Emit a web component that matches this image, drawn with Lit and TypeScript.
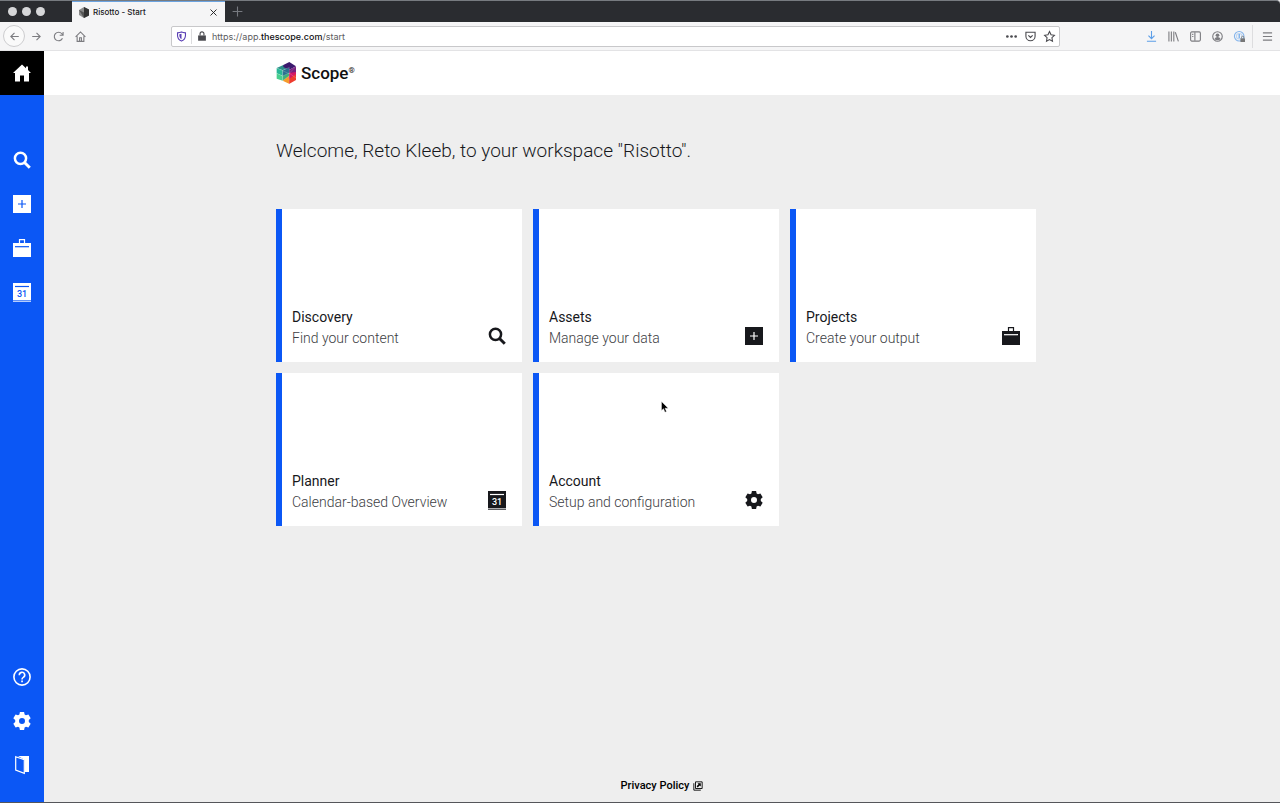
import { LitElement, html, svg, css } from "lit";
import { customElement, property } from "lit/decorators.js";

const shapes: Record<string, unknown> = {
  home: svg`<path d="M9 .5 0 9h2v8.500h5v-6h4v6h5V9h2L15 6.100V2.500h-2v1.700z" />`,
  search: svg`<circle cx="7.500" cy="7.300" r="5.600" fill="none" stroke="currentColor" stroke-width="2.500" /><path d="m11.500 11.500 5.300 5.200" stroke="currentColor" stroke-width="3" />`,
  plus: svg`<path d="M0 0h18v18H0z" /><path class="cut" d="M9 5v8M5 9h8" />`,
  case: svg`<path d="M0 4h18v14H0z" /><path d="M6.500 4V.700h5V4" fill="none" stroke="currentColor" stroke-width="1.200" /><path class="cut" d="M2 7.700h14" />`,
  calendar: svg`<path d="M0 0h18v17H0z" /><path class="cut" d="M2 3.500h14" /><text class="day" x="9" y="13.500" text-anchor="middle">31</text><path d="M0 17.500h18v1.500H0z" opacity=".7" />`,
  help: svg`<circle cx="9" cy="9" r="8.100" fill="none" stroke="currentColor" stroke-width="1.600" /><path d="M6.300 7.200a2.700 2.700 0 1 1 4 2.200Q9 10.200 9 11.400" fill="none" stroke="currentColor" stroke-width="1.600" /><path d="M8.200 12.500h1.700v1.700H8.200z" />`,
  gear: svg`<path fill-rule="evenodd" d="M6.900 0h4.200l.5 2.500 1.400.8L15.400 2.500 17.700 6.200l-1.900 1.900v1.800l1.900 1.900-2.300 3.700-2.400-.8-1.400.8-.5 2.500H6.900l-.5-2.500-1.400-.8-2.400.8L.300 11.800l1.900-1.900V8.100L.300 6.200 2.600 2.500 5 3.300l1.400-.8zM9 6a3 3 0 1 0 0 6 3 3 0 0 0 0-6z" />`,
  door: svg`<path d="M5 0h11v16h-4V4z" /><path d="M2.700.700 11.300 3.700v13.600L2.700 14z" fill="none" stroke="currentColor" stroke-width="1.200" />`,
  external: svg`<path d="M4.500 1.500h12v12h-12z" fill="none" stroke="currentColor" stroke-width="1.600" /><path d="M1.500 4v12.500H14" fill="none" stroke="currentColor" stroke-width="1.600" /><path d="M8 4h6v6l-2-2-3.500 3.500-2-2L10 6z" />`,
  back: svg`<path class="line" d="M16 9H3m6-6-6 6 6 6" />`,
  forward: svg`<path class="line" d="M2 9h13m-6-6 6 6-6 6" />`,
  reload: svg`<path class="line" d="M15.500 12a7 7 0 1 1-1-7.500l1.500 2.500M16.500 1.500V7H11" />`,
  house: svg`<path class="line" d="m1 9.500 8-8 8 8M3.500 8.500V17h11V8.500M7.500 17v-6h3v6" />`,
  close: svg`<path class="line" d="m3 3 12 12M15 3 3 15" />`,
  add: svg`<path class="line" d="M9 1v16M1 9h16" />`,
  shield: svg`<path class="line" d="M9 1.500c2 1 4 1.300 6.500 1.500v4c0 5-2.500 8-6.500 9.500C5 15 2.500 12 2.500 7V3C5 2.800 7 2.500 9 1.500z" /><path d="M9 4.500v9C6.500 12 5.500 10 5.500 7.500V5.200Q7.500 5 9 4.500z" />`,
  lock: svg`<path d="M2 8h14v9.500H2z" /><path d="M5.500 8V5a3.500 3.500 0 0 1 7 0v3" fill="none" stroke="currentColor" stroke-width="2" />`,
  dots: svg`<circle cx="2.200" cy="9" r="2.200" /><circle cx="9" cy="9" r="2.200" /><circle cx="15.800" cy="9" r="2.200" />`,
  pocket: svg`<path class="line" d="M1.500 2h15v6.500a7.500 7.500 0 0 1-15 0zM5.500 7 9 10.500 12.500 7" />`,
  star: svg`<path class="line" d="m9 1 2.500 5.200 5.500.8-4 4 .9 5.700L9 14l-4.900 2.700L5 11 1 7l5.500-.8z" />`,
  download: svg`<path class="line" d="M9 0v12M4 7.500 9 12.500 14 7.500M1.500 16.800h15" />`,
  library: svg`<path class="line" d="M1.500 1v16M5.500 1v16M9.500 1v16M12 2l5 15" />`,
  panel: svg`<rect class="line" x="1" y="1.500" width="16" height="15" rx="2" /><path class="line" d="M8 2v14M3.500 5.500h2M3.500 9h2" />`,
  user: svg`<circle class="line" cx="9" cy="9" r="7.800" stroke-width="1.200" /><circle cx="9" cy="7" r="3" /><path d="M4 13q1.500-3 5-3t5 3q-2 2-5 2t-5-2z" />`,
  key: svg`<circle class="line" cx="8.500" cy="8.500" r="7.800" opacity=".75" /><circle class="line" cx="8.500" cy="8.500" r="4.500" opacity=".35" /><path class="line" d="M8.500 5v7" /><path d="M10.500 12H18v6h-7.500z" fill="#777" /><path d="M12.300 12v-1.500a2 2 0 0 1 4 0V12" fill="none" stroke="#777" stroke-width="1.300" />`,
  menu: svg`<path class="line" d="M1.500 3h15M1.500 9h15M1.500 15h15" />`,
};

@customElement("ui-icon")
class UiIcon extends LitElement {
  @property() name = "";
  static styles = css`
    :host { display: block; width: 18px; height: 18px; flex: none; }
    svg { display: block; width: 100%; height: 100%; fill: currentColor; overflow: visible; }
    .cut { fill: none; stroke: var(--icon-cut, #0b57f5); stroke-width: 1.2; }
    .line { fill: none; stroke: currentColor; stroke-width: 1.8; }
    .day { font: 500 9px Roboto, sans-serif; fill: var(--icon-cut, #0b57f5); }
  `;
  render() {
    return html`<svg viewBox="0 0 18 18" aria-hidden="true">${shapes[this.name]}</svg>`;
  }
}

@customElement("browser-bar")
class BrowserBar extends LitElement {
  static styles = css`
    :host { display: block; font-family: Inter, sans-serif; color: #38383d; }
    button { border: 0; padding: 0; background: none; color: inherit; display: grid; place-items: center; }
    ui-icon { width: 11px; height: 11px; }
    .tabs { display: flex; height: 22px; background: #2a2c30; border-top: 1px solid #777b80; box-sizing: border-box; border-radius: 0 4px 0 0; }
    .lights { display: flex; align-items: center; gap: 5px; width: 72px; padding-left: 8px; box-sizing: border-box; }
    .lights button { width: 9px; height: 9px; border-radius: 50%; background: #d6d7d9; }
    .tab { display: flex; align-items: center; gap: 4px; width: 153px; box-sizing: border-box; padding: 0 7px; background: #f5f5f6; border-top: 1px solid #6ba3e0; font-size: 8px; font-weight: 500; line-height: 12px; color: #18181a; }
    .tab span { flex: 1; }
    .tab > svg { width: 10px; height: 11px; }
    .close ui-icon { width: 9px; height: 9px; }
    .new { width: 24px; color: #777a80; }
    .tools { display: flex; align-items: center; height: 29px; box-sizing: border-box; padding: 0 2px 0 3px; background: #f5f5f6; border-bottom: 1px solid #e3e3e5; color: #7c7c80; }
    .tools > button { width: 22px; height: 22px; }
    .tools .back { border: 1px solid #cdcdcf; border-radius: 50%; background: #fafafa; box-sizing: border-box; }
    .spring { flex: 0 1 80px; }
    .address { flex: 1; display: flex; align-items: center; height: 21px; box-sizing: border-box; border: 1px solid #c8c8ca; border-radius: 2px; background: #fff; padding: 0 0 0 4px; color: #4a4a4f; }
    .address button { width: 19px; height: 19px; }
    .address .shield { color: #5a3fb5; width: 11px; }
    .address .secure { width: 12px; }
    .rule { width: 1px; height: 15px; background: #dcdcde; margin: 0 4px; }
    .address ui-icon.lock { width: 10px; height: 10px; }
    .url { flex: 1; font-size: 9px; line-height: 15px; color: #5c5c60; padding-left: 4px; white-space: nowrap; outline: none; }
    .url b { font-weight: 500; color: #101012; }
    .blue { color: #5c9ee8; }
    .edge { width: 1px; height: 23px; background: #dddddf; margin: 0 3px 0 2px; }
  `;
  render() {
    return html`
      <div class="tabs">
        <div class="lights">
          <button aria-label="Close window"></button><button aria-label="Minimise window"></button><button aria-label="Zoom window"></button>
        </div>
        <div class="tab">
          <svg viewBox="0 0 20 22" aria-hidden="true"><path d="m0 6 10-6 10 5v12l-10 5-10-6z" fill="#8a8a8a" /><path d="m10 0 10 5v12l-10 5z" fill="#333" /><path d="m0 6 10 5v11" fill="#555" /></svg>
          <span>Risotto - Start</span>
          <button class="close" aria-label="Close tab"><ui-icon name="close"></ui-icon></button>
        </div>
        <button class="new" aria-label="New tab"><ui-icon name="add"></ui-icon></button>
      </div>
      <div class="tools">
        <button class="back" aria-label="Back"><ui-icon name="back"></ui-icon></button>
        <button aria-label="Forward"><ui-icon name="forward"></ui-icon></button>
        <button aria-label="Reload"><ui-icon name="reload"></ui-icon></button>
        <button aria-label="Home page"><ui-icon name="house"></ui-icon></button>
        <div class="spring"></div>
        <div class="address">
          <button class="shield" aria-label="Tracking protection"><ui-icon name="shield"></ui-icon></button>
          <i class="rule"></i>
          <button class="secure" aria-label="Connection security"><ui-icon class="lock" name="lock"></ui-icon></button>
          <div class="url" role="textbox" aria-label="Address" contenteditable="true" spellcheck="false">https://app.<b>thescope.com</b>/start</div>
          <button aria-label="Page actions"><ui-icon name="dots"></ui-icon></button>
          <button aria-label="Save to Pocket"><ui-icon name="pocket"></ui-icon></button>
          <button aria-label="Bookmark"><ui-icon name="star"></ui-icon></button>
        </div>
        <div class="spring"></div>
        <button class="blue" aria-label="Downloads"><ui-icon name="download"></ui-icon></button>
        <button aria-label="Library"><ui-icon name="library"></ui-icon></button>
        <button aria-label="Sidebars"><ui-icon name="panel"></ui-icon></button>
        <button aria-label="Profile"><ui-icon name="user"></ui-icon></button>
        <button class="blue" aria-label="Passwords"><ui-icon name="key"></ui-icon></button>
        <i class="edge"></i>
        <button aria-label="Menu"><ui-icon name="menu"></ui-icon></button>
      </div>
    `;
  }
}

const cards = [
  { title: "Discovery", text: "Find your content", icon: "search" },
  { title: "Assets", text: "Manage your data", icon: "plus" },
  { title: "Projects", text: "Create your output", icon: "case" },
  { title: "Planner", text: "Calendar-based Overview", icon: "calendar" },
  { title: "Account", text: "Setup and configuration", icon: "gear" },
];

const link = (label: string, icon: string, cls = "") =>
  html`<a class="item ${cls}" href="#" aria-label=${label}><ui-icon name=${icon}></ui-icon></a>`;

@customElement("app-root")
class AppRoot extends LitElement {
  static styles = css`
    :host { display: flex; flex-direction: column; min-height: 100vh; box-sizing: border-box; background: #eee; border-bottom: 1px solid #55565a; font-family: Roboto, sans-serif; color: #17181c; }
    a { color: inherit; text-decoration: none; }
    .shell { flex: 1; display: flex; }
    .side { width: 44px; flex: none; display: flex; flex-direction: column; background: #0b57f5; color: #fff; padding-bottom: 15px; box-sizing: border-box; }
    .item { display: grid; place-items: center; height: 44px; }
    .item.active { background: #000; margin-bottom: 43px; }
    .spacer { flex: 1; }
    .page { flex: 1; display: flex; flex-direction: column; }
    .head { background: #fff; height: 44px; }
    .wrap { width: 100%; max-width: 772px; margin: 0 auto; padding-right: 12px; box-sizing: border-box; }
    .brand { display: inline-flex; align-items: center; gap: 4px; height: 44px; font-size: 17px; font-weight: 500; line-height: 20px; color: #111; }
    .brand svg { width: 21px; height: 22px; }
    .brand sup { font-size: 8px; line-height: 8px; vertical-align: 6px; }
    h1 { margin: 42px 0 45px; font-size: 19px; font-weight: 300; line-height: 27px; }
    .grid { display: grid; grid-template-columns: repeat(3, 1fr); gap: 11px; }
    .card { position: relative; display: flex; align-items: flex-end; justify-content: space-between; min-height: 153px; box-sizing: border-box; padding: 14px 16px 13px 10px; background: #fff; border-left: 6px solid #0b57f5; font-size: 14px; line-height: 21px; --icon-cut: #fff; }
    .card h2 { margin: 0; font-size: 14px; font-weight: 400; line-height: 21px; }
    .card p { margin: 0; font-weight: 300; color: #3c3d43; }
    .card ui-icon { margin-bottom: 4px; }
    .pointer { position: absolute; left: 122px; top: 28px; width: 8px; height: 12px; }
    footer { margin-top: auto; display: flex; justify-content: center; padding-bottom: 8px; font-size: 11px; font-weight: 500; line-height: 16px; color: #000; }
    footer a { display: flex; align-items: center; gap: 4px; }
    footer ui-icon { width: 10px; height: 10px; }
  `;
  render() {
    return html`
      <browser-bar></browser-bar>
      <div class="shell">
        <nav class="side" aria-label="Main">
          ${link("Home", "home", "active")} ${link("Discovery", "search")} ${link("Assets", "plus")}
          ${link("Projects", "case")} ${link("Planner", "calendar")}
          <div class="spacer"></div>
          ${link("Help", "help")} ${link("Settings", "gear")} ${link("Log out", "door")}
        </nav>
        <div class="page">
          <header class="head">
            <div class="wrap">
              <a class="brand" href="#">
                <svg viewBox="0 0 63 66" aria-hidden="true">
                  <path d="m2 18 20-9 17 8-19 8z" fill="#2f8f8a" />
                  <path d="M22 9 40 0l20 13-21 11-17-9z" fill="#3b1a6e" />
                  <path d="m2 18 18 7v17L2 34z" fill="#27b795" />
                  <path d="m20 25 19-8v24l-19 1z" fill="#2b6f90" />
                  <path d="m2 34 18 8v14L2 50z" fill="#48cf8e" />
                  <path d="m20 42 19-9v18l-19 5z" fill="#3fae7c" />
                  <path d="m20 56 19-14v23z" fill="#f59a2c" />
                  <path d="m39 24 21-11v20l-21 4z" fill="#75207e" />
                  <path d="m39 33 21-3v18l-21 4z" fill="#d31766" />
                  <path d="m39 51 21-15v18L39 66z" fill="#ee3c2f" />
                  <path d="m2 18 37 17 21-22M2 34l18 8 19-9 21 15M20 56V25l20-9v50M20 56l19-14" fill="none" stroke="#fff" stroke-opacity=".35" stroke-width="1.500" />
                </svg>
                <span>Scope<sup>®</sup></span>
              </a>
            </div>
          </header>
          <main class="wrap">
            <h1>Welcome, Reto Kleeb, to your workspace "Risotto".</h1>
            <div class="grid">
              ${cards.map(
                (c) => html`<a class="card" href="#">
                  <div><h2>${c.title}</h2><p>${c.text}</p></div>
                  <ui-icon name=${c.icon}></ui-icon>
                  ${c.icon === "gear"
                    ? html`<svg class="pointer" viewBox="0 0 8 12" aria-hidden="true"><path d="M.500.500v9l2-1.800 1.500 3.500 1.500-.7L4 7.200h3.200z" fill="#000" stroke="#fff" stroke-width=".4" /></svg>`
                    : ""}
                </a>`
              )}
            </div>
          </main>
          <footer><a href="#">Privacy Policy <ui-icon name="external"></ui-icon></a></footer>
        </div>
      </div>
    `;
  }
}
